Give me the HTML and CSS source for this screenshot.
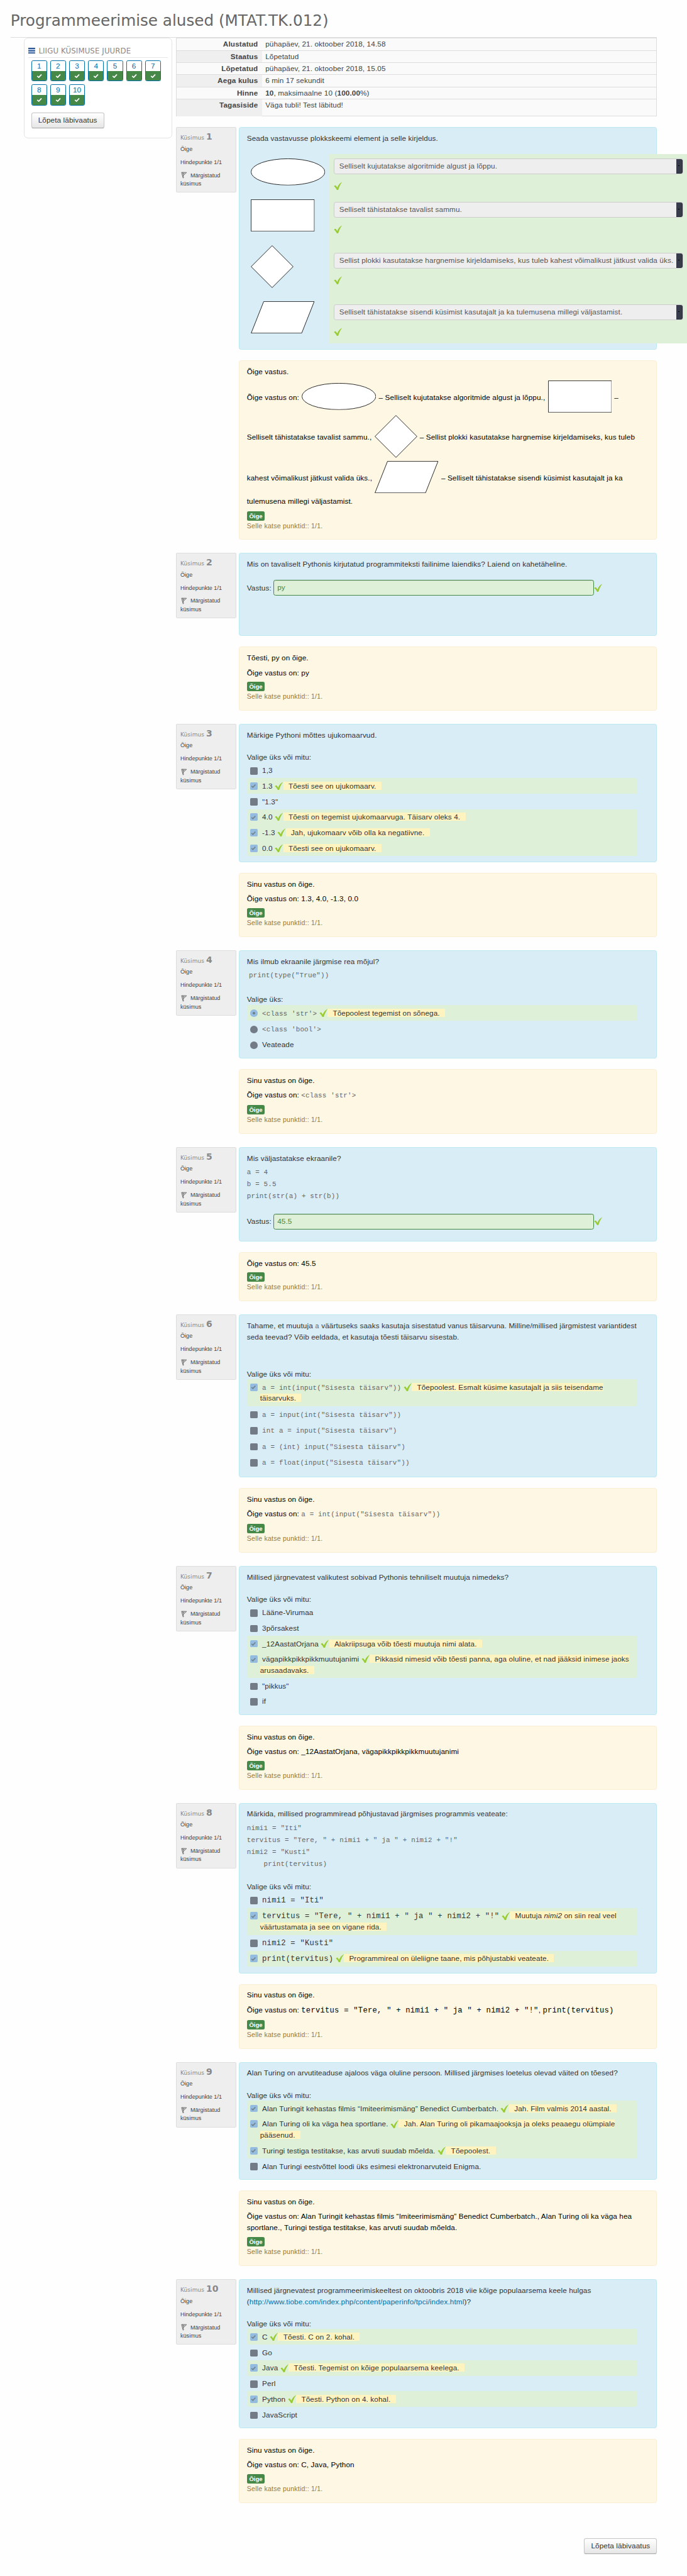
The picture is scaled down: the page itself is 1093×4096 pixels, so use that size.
FILE: index.html
```html
<!DOCTYPE html>
<html lang="et">
<head>
<meta charset="utf-8">
<title>Programmeerimise alused (MTAT.TK.012)</title>
<link rel="stylesheet" href="styles.css">
</head>
<body>
<svg class="defs" aria-hidden="true">
  <symbol id="tick" viewBox="0 0 16 16"><path d="M.3 8.2 3.2 6.6C4.6 7.9 5.6 9.3 6.4 10.9 8.4 6.3 11.4 2.6 15.7.2 12.6 4.6 9.9 9.8 8.6 15.3L6 15.9C4.700 12.700 2.700 10.200.3 8.200Z" fill="#9c3"/></symbol>
  <symbol id="wtick" viewBox="0 0 12 10"><path d="M1.500 5 4.800 8 10.500 1.800" fill="none" stroke="currentColor" stroke-width="2.300"/></symbol>
  <symbol id="flag" viewBox="0 0 12 13"><path d="M1 1.200 4 12.300M3.300 1.300 4.800 12M1 1.300 10.600 1.500 4.500 7.200M3.500 1.400 5 4.600 7.200 2" fill="none" stroke="#666" stroke-width="1.100"/></symbol>
  <symbol id="ellipse" viewBox="0 0 141 51"><ellipse cx="70.500" cy="25.500" rx="70" ry="25" fill="#fff" stroke="#000"/></symbol>
  <symbol id="rect" viewBox="0 0 121 61"><path d="M.5.5H120.500V60.500H.5Z" fill="#fff" stroke="#000"/></symbol>
  <symbol id="diamond" viewBox="0 0 81 81"><path d="M40.500.7 80.300 40.500 40.500 80.300.7 40.500Z" fill="#fff" stroke="#000"/></symbol>
  <symbol id="para" viewBox="0 0 121 61"><path d="M24.500.5H120.300L96.500 60.500H.7Z" fill="#fff" stroke="#000"/></symbol>
</svg>
<div class="page">
  <header class="page-header"><h1>Programmeerimise alused (MTAT.TK.012)</h1></header>
  <div class="columns">
    <aside class="block">
      <h2 class="block-title"><svg class="bars" viewBox="0 0 13 11"><path d="M0 1H13M0 5.500H13M0 10H13" stroke="#0d3f86" stroke-width="2"/><path d="M0 3.200H13M0 7.700H13" stroke="#8fb0dc" stroke-width="1"/></svg>LIIGU KÜSIMUSE JUURDE</h2>
      <nav class="numbers">
        <a class="num">1<i><svg><use href="#wtick"/></svg></i></a>
        <a class="num">2<i><svg><use href="#wtick"/></svg></i></a>
        <a class="num">3<i><svg><use href="#wtick"/></svg></i></a>
        <a class="num">4<i><svg><use href="#wtick"/></svg></i></a>
        <a class="num">5<i><svg><use href="#wtick"/></svg></i></a>
        <a class="num">6<i><svg><use href="#wtick"/></svg></i></a>
        <a class="num">7<i><svg><use href="#wtick"/></svg></i></a>
        <a class="num">8<i><svg><use href="#wtick"/></svg></i></a>
        <a class="num">9<i><svg><use href="#wtick"/></svg></i></a>
        <a class="num">10<i><svg><use href="#wtick"/></svg></i></a>
      </nav>
      <a class="btn">Lõpeta läbivaatus</a>
    </aside>
    <main class="main">
      <dl class="summary">
        <dt>Alustatud</dt><dd>pühapäev, 21. oktoober 2018, 14.58</dd>
        <dt>Staatus</dt><dd>Lõpetatud</dd>
        <dt>Lõpetatud</dt><dd>pühapäev, 21. oktoober 2018, 15.05</dd>
        <dt>Aega kulus</dt><dd>6 min 17 sekundit</dd>
        <dt>Hinne</dt><dd><b>10</b>, maksimaalne 10 (<b>100.00</b>%)</dd>
        <dt>Tagasiside</dt><dd>Väga tubli! Test läbitud!</dd>
      </dl>

      <section class="question q1">
        <div class="info"><h3>Küsimus <b>1</b></h3><p>Õige</p><p>Hindepunkte 1/1</p><p class="flagged"><svg><use href="#flag"/></svg> Märgistatud<br>küsimus</p></div>
        <div class="content">
          <p>Seada vastavusse plokkskeemi element ja selle kirjeldus.</p>
          <div class="match">
            <div class="shapes">
              <svg class="ellipse"><use href="#ellipse"/></svg>
              <svg class="rect"><use href="#rect"/></svg>
              <svg class="diamond"><use href="#diamond"/></svg>
              <svg class="rect"><use href="#para"/></svg>
            </div>
            <div class="picks">
              <div class="pick"><div class="select"><span>Selliselt kujutatakse algoritmide algust ja lõppu.</span><i></i></div><svg class="tick"><use href="#tick"/></svg></div>
              <div class="pick tall"><div class="select"><span>Selliselt tähistatakse tavalist sammu.</span><i></i></div><svg class="tick"><use href="#tick"/></svg></div>
              <div class="pick tall"><div class="select"><span>Sellist plokki kasutatakse hargnemise kirjeldamiseks, kus tuleb kahest võimalikust jätkust valida üks.</span><i></i></div><svg class="tick"><use href="#tick"/></svg></div>
              <div class="pick"><div class="select"><span>Selliselt tähistatakse sisendi küsimist kasutajalt ja ka tulemusena millegi väljastamist.</span><i></i></div><svg class="tick"><use href="#tick"/></svg></div>
            </div>
          </div>
        </div>
        <div class="feedback">
          <p>Õige vastus.</p>
          <p class="pictured">Õige vastus on: <svg class="ellipse"><use href="#ellipse"/></svg> – Selliselt kujutatakse algoritmide algust ja lõppu., <svg class="rect"><use href="#rect"/></svg> –<br>Selliselt tähistatakse tavalist sammu., <svg class="diamond"><use href="#diamond"/></svg> – Sellist plokki kasutatakse hargnemise kirjeldamiseks, kus tuleb<br>kahest võimalikust jätkust valida üks., <svg class="rect"><use href="#para"/></svg> – Selliselt tähistatakse sisendi küsimist kasutajalt ja ka<br>tulemusena millegi väljastamist.</p>
          <span class="badge">Õige</span><p class="points">Selle katse punktid:: 1/1.</p>
        </div>
      </section>

      <section class="question q2">
        <div class="info"><h3>Küsimus <b>2</b></h3><p>Õige</p><p>Hindepunkte 1/1</p><p class="flagged"><svg><use href="#flag"/></svg> Märgistatud<br>küsimus</p></div>
        <div class="content">
          <p>Mis on tavaliselt Pythonis kirjutatud programmiteksti failinime laiendiks? Laiend on kahetäheline.</p>
          <div class="answer">Vastus: <span class="input">py</span><svg class="tick"><use href="#tick"/></svg></div>
        </div>
        <div class="feedback">
          <p>Tõesti, py on õige.</p>
          <p>Õige vastus on: py</p>
          <span class="badge">Õige</span><p class="points">Selle katse punktid:: 1/1.</p>
        </div>
      </section>

      <section class="question q3">
        <div class="info"><h3>Küsimus <b>3</b></h3><p>Õige</p><p>Hindepunkte 1/1</p><p class="flagged"><svg><use href="#flag"/></svg> Märgistatud<br>küsimus</p></div>
        <div class="content">
          <p>Märkige Pythoni mõttes ujukomaarvud.</p>
          <p class="prompt">Valige üks või mitu:</p>
          <ul class="options">
            <li><span class="box"></span>1,3</li>
            <li class="right"><span class="box on"><svg><use href="#wtick"/></svg></span>1.3 <svg class="tick"><use href="#tick"/></svg><em>Tõesti see on ujukomaarv.</em></li>
            <li><span class="box"></span>"1.3"</li>
            <li class="right"><span class="box on"><svg><use href="#wtick"/></svg></span>4.0 <svg class="tick"><use href="#tick"/></svg><em>Tõesti on tegemist ujukomaarvuga. Täisarv oleks 4.</em></li>
            <li class="right"><span class="box on"><svg><use href="#wtick"/></svg></span>-1.3 <svg class="tick"><use href="#tick"/></svg><em>Jah, ujukomaarv võib olla ka negatiivne.</em></li>
            <li class="right"><span class="box on"><svg><use href="#wtick"/></svg></span>0.0 <svg class="tick"><use href="#tick"/></svg><em>Tõesti see on ujukomaarv.</em></li>
          </ul>
        </div>
        <div class="feedback">
          <p>Sinu vastus on õige.</p>
          <p>Õige vastus on: 1.3, 4.0, -1.3, 0.0</p>
          <span class="badge">Õige</span><p class="points">Selle katse punktid:: 1/1.</p>
        </div>
      </section>

      <section class="question q4">
        <div class="info"><h3>Küsimus <b>4</b></h3><p>Õige</p><p>Hindepunkte 1/1</p><p class="flagged"><svg><use href="#flag"/></svg> Märgistatud<br>küsimus</p></div>
        <div class="content">
          <p>Mis ilmub ekraanile järgmise rea mõjul?</p>
          <pre class="inset">print(type("True"))</pre>
          <p class="prompt">Valige üks:</p>
          <ul class="options coded">
            <li class="right"><span class="box round on"></span><code>&lt;class 'str'&gt;</code> <svg class="tick"><use href="#tick"/></svg><em>Tõepoolest tegemist on sõnega.</em></li>
            <li><span class="box round"></span><code>&lt;class 'bool'&gt;</code></li>
            <li><span class="box round"></span>Veateade</li>
          </ul>
        </div>
        <div class="feedback coded">
          <p>Sinu vastus on õige.</p>
          <p>Õige vastus on: <code>&lt;class 'str'&gt;</code></p>
          <span class="badge">Õige</span><p class="points">Selle katse punktid:: 1/1.</p>
        </div>
      </section>

      <section class="question q5">
        <div class="info"><h3>Küsimus <b>5</b></h3><p>Õige</p><p>Hindepunkte 1/1</p><p class="flagged"><svg><use href="#flag"/></svg> Märgistatud<br>küsimus</p></div>
        <div class="content">
          <p>Mis väljastatakse ekraanile?</p>
          <pre>a = 4
b = 5.5
print(str(a) + str(b))</pre>
          <div class="answer">Vastus: <span class="input">45.5</span><svg class="tick"><use href="#tick"/></svg></div>
        </div>
        <div class="feedback">
          <p>Õige vastus on: 45.5</p>
          <span class="badge">Õige</span><p class="points">Selle katse punktid:: 1/1.</p>
        </div>
      </section>

      <section class="question q6">
        <div class="info"><h3>Küsimus <b>6</b></h3><p>Õige</p><p>Hindepunkte 1/1</p><p class="flagged"><svg><use href="#flag"/></svg> Märgistatud<br>küsimus</p></div>
        <div class="content">
          <p>Tahame, et muutuja <code>a</code> väärtuseks saaks kasutaja sisestatud vanus täisarvuna. Milline/millised järgmistest variantidest<br>seda teevad? Võib eeldada, et kasutaja tõesti täisarvu sisestab.</p>
          <p class="prompt">Valige üks või mitu:</p>
          <ul class="options coded">
            <li class="right"><span class="box on"><svg><use href="#wtick"/></svg></span><code>a = int(input("Sisesta täisarv"))</code> <svg class="tick"><use href="#tick"/></svg><em>Tõepoolest. Esmalt küsime kasutajalt ja siis teisendame<br>täisarvuks.</em></li>
            <li><span class="box"></span><code>a = input(int("Sisesta täisarv"))</code></li>
            <li><span class="box"></span><code>int a = input("Sisesta täisarv")</code></li>
            <li><span class="box"></span><code>a = (int) input("Sisesta täisarv")</code></li>
            <li><span class="box"></span><code>a = float(input("Sisesta täisarv"))</code></li>
          </ul>
        </div>
        <div class="feedback coded">
          <p>Sinu vastus on õige.</p>
          <p>Õige vastus on: <code>a = int(input("Sisesta täisarv"))</code></p>
          <span class="badge">Õige</span><p class="points">Selle katse punktid:: 1/1.</p>
        </div>
      </section>

      <section class="question q7">
        <div class="info"><h3>Küsimus <b>7</b></h3><p>Õige</p><p>Hindepunkte 1/1</p><p class="flagged"><svg><use href="#flag"/></svg> Märgistatud<br>küsimus</p></div>
        <div class="content">
          <p>Millised järgnevatest valikutest sobivad Pythonis tehniliselt muutuja nimedeks?</p>
          <p class="prompt">Valige üks või mitu:</p>
          <ul class="options">
            <li><span class="box"></span>Lääne-Virumaa</li>
            <li><span class="box"></span>3põrsakest</li>
            <li class="right"><span class="box on"><svg><use href="#wtick"/></svg></span>_12AastatOrjana <svg class="tick"><use href="#tick"/></svg><em>Alakriipsuga võib tõesti muutuja nimi alata.</em></li>
            <li class="right"><span class="box on"><svg><use href="#wtick"/></svg></span>vägapikkpikkpikkmuutujanimi <svg class="tick"><use href="#tick"/></svg><em>Pikkasid nimesid võib tõesti panna, aga oluline, et nad jääksid inimese jaoks<br>arusaadavaks.</em></li>
            <li><span class="box"></span>"pikkus"</li>
            <li><span class="box"></span>if</li>
          </ul>
        </div>
        <div class="feedback">
          <p>Sinu vastus on õige.</p>
          <p>Õige vastus on: _12AastatOrjana, vägapikkpikkpikkmuutujanimi</p>
          <span class="badge">Õige</span><p class="points">Selle katse punktid:: 1/1.</p>
        </div>
      </section>

      <section class="question q8">
        <div class="info"><h3>Küsimus <b>8</b></h3><p>Õige</p><p>Hindepunkte 1/1</p><p class="flagged"><svg><use href="#flag"/></svg> Märgistatud<br>küsimus</p></div>
        <div class="content">
          <p>Märkida, millised programmiread põhjustavad järgmises programmis veateate:</p>
          <pre>nimi1 = "Iti"
tervitus = "Tere, " + nimi1 + " ja " + nimi2 + "!"
nimi2 = "Kusti"
    print(tervitus)</pre>
          <p class="prompt">Valige üks või mitu:</p>
          <ul class="options mono">
            <li><span class="box"></span><tt>nimi1 = "Iti"</tt></li>
            <li class="right"><span class="box on"><svg><use href="#wtick"/></svg></span><tt>tervitus = "Tere, " + nimi1 + " ja " + nimi2 + "!"</tt> <svg class="tick"><use href="#tick"/></svg><em>Muutuja <i>nimi2</i> on siin real veel<br>väärtustamata ja see on vigane rida.</em></li>
            <li><span class="box"></span><tt>nimi2 = "Kusti"</tt></li>
            <li class="right"><span class="box on"><svg><use href="#wtick"/></svg></span><tt>print(tervitus)</tt> <svg class="tick"><use href="#tick"/></svg><em>Programmireal on üleliigne taane, mis põhjustabki veateate.</em></li>
          </ul>
        </div>
        <div class="feedback coded">
          <p>Sinu vastus on õige.</p>
          <p>Õige vastus on: <tt>tervitus = "Tere, " + nimi1 + " ja " + nimi2 + "!"</tt>, <tt>print(tervitus)</tt></p>
          <span class="badge">Õige</span><p class="points">Selle katse punktid:: 1/1.</p>
        </div>
      </section>

      <section class="question q9">
        <div class="info"><h3>Küsimus <b>9</b></h3><p>Õige</p><p>Hindepunkte 1/1</p><p class="flagged"><svg><use href="#flag"/></svg> Märgistatud<br>küsimus</p></div>
        <div class="content">
          <p>Alan Turing on arvutiteaduse ajaloos väga oluline persoon. Millised järgmises loetelus olevad väited on tõesed?</p>
          <p class="prompt">Valige üks või mitu:</p>
          <ul class="options">
            <li class="right"><span class="box on"><svg><use href="#wtick"/></svg></span>Alan Turingit kehastas filmis “Imiteerimismäng” Benedict Cumberbatch. <svg class="tick"><use href="#tick"/></svg><em>Jah. Film valmis 2014 aastal.</em></li>
            <li class="right"><span class="box on"><svg><use href="#wtick"/></svg></span>Alan Turing oli ka väga hea sportlane. <svg class="tick"><use href="#tick"/></svg><em>Jah. Alan Turing oli pikamaajooksja ja oleks peaaegu olümpiale<br>pääsenud.</em></li>
            <li class="right"><span class="box on"><svg><use href="#wtick"/></svg></span>Turingi testiga testitakse, kas arvuti suudab mõelda. <svg class="tick"><use href="#tick"/></svg><em>Tõepoolest.</em></li>
            <li><span class="box"></span>Alan Turingi eestvõttel loodi üks esimesi elektronarvuteid Enigma.</li>
          </ul>
        </div>
        <div class="feedback">
          <p>Sinu vastus on õige.</p>
          <p>Õige vastus on: Alan Turingit kehastas filmis “Imiteerimismäng” Benedict Cumberbatch., Alan Turing oli ka väga hea<br>sportlane., Turingi testiga testitakse, kas arvuti suudab mõelda.</p>
          <span class="badge">Õige</span><p class="points">Selle katse punktid:: 1/1.</p>
        </div>
      </section>

      <section class="question q10">
        <div class="info"><h3>Küsimus <b>10</b></h3><p>Õige</p><p>Hindepunkte 1/1</p><p class="flagged"><svg><use href="#flag"/></svg> Märgistatud<br>küsimus</p></div>
        <div class="content">
          <p>Millised järgnevatest programmeerimiskeeltest on oktoobris 2018 viie kõige populaarsema keele hulgas<br>(<a>http://www.tiobe.com/index.php/content/paperinfo/tpci/index.html</a>)?</p>
          <p class="prompt">Valige üks või mitu:</p>
          <ul class="options">
            <li class="right"><span class="box on"><svg><use href="#wtick"/></svg></span>C <svg class="tick"><use href="#tick"/></svg><em>Tõesti. C on 2. kohal.</em></li>
            <li><span class="box"></span>Go</li>
            <li class="right"><span class="box on"><svg><use href="#wtick"/></svg></span>Java <svg class="tick"><use href="#tick"/></svg><em>Tõesti. Tegemist on kõige populaarsema keelega.</em></li>
            <li><span class="box"></span>Perl</li>
            <li class="right"><span class="box on"><svg><use href="#wtick"/></svg></span>Python <svg class="tick"><use href="#tick"/></svg><em>Tõesti. Python on 4. kohal.</em></li>
            <li><span class="box"></span>JavaScript</li>
          </ul>
        </div>
        <div class="feedback">
          <p>Sinu vastus on õige.</p>
          <p>Õige vastus on: C, Java, Python</p>
          <span class="badge">Õige</span><p class="points">Selle katse punktid:: 1/1.</p>
        </div>
      </section>

      <div class="finish"><a class="btn">Lõpeta läbivaatus</a></div>
    </main>
  </div>
</div>
</body>
</html>
```
FILE: styles.css
```css
* { box-sizing: border-box; }

html { background: #fefefe; }

body {
  margin: 0;
  font: 14px/21px "Liberation Sans", Arial, sans-serif;
  letter-spacing: 0.13px;
  color: #333;
}

p, h1, h2, h3, pre, dl, dd, ul { margin: 0; padding: 0; font-weight: normal; }

.defs { display: none; }

.page { zoom: 0.839; width: 1302.700px; padding: 0 0 38px 20px; overflow: hidden; }

.page-header { width: 1226px; height: 71px; border-bottom: 1px solid #ddd; padding-top: 19px; }
.page-header h1 { font: 29.4px/40px "DejaVu Sans", sans-serif; letter-spacing: 0; color: #666; }

.columns { display: flex; align-items: flex-start; }

/* Navigation block */
.block { flex: none; width: 282px; height: 191px; margin: 0 7px 0 25px; padding: 16px 8px 0; border: 1px solid #e3e3e3; border-radius: 8px; background: #fff; }
.block-title { display: flex; align-items: center; height: 22px; padding-bottom: 2px; border-bottom: 1px solid #e5e5e5; font: 14px/20px "DejaVu Sans", sans-serif; letter-spacing: 0.15px; color: #888; }
.bars { width: 13px; height: 11px; margin: -3px 6px 0 0; }
.numbers { display: flex; flex-wrap: wrap; gap: 6px; padding: 4px 0 0 5px; }
.num { display: flex; flex-direction: column; width: 30px; height: 40px; border: 1px solid #0070a8; border-radius: 3px; overflow: hidden; text-align: center; line-height: 19px; color: #0070a8; }
.num i { display: flex; flex: 1; align-items: center; justify-content: center; background: #468847; color: #fff; }
.num svg { width: 11px; height: 9px; }
.btn { display: inline-block; height: 30px; padding: 0 12px; border: 1px solid #c5c5c5; border-bottom-color: #aaa; border-radius: 4px; background: linear-gradient(#fff, #e6e6e6); box-shadow: 0 1px 2px rgba(0, 0, 0, .06); line-height: 27px; white-space: nowrap; color: #333; }
.block .btn { margin: 13px 0 0 5px; }

/* Attempt summary */
.main { flex: none; width: 912px; }
.summary { display: grid; grid-template-columns: 162px 1fr; grid-template-rows: 23px 23px 23px 23px 23px 33px; height: 149px; margin-top: 1px; border: 1px solid #ddd; border-top: 0; background: #fafafa; line-height: 22px; }
.summary dt { border-top: 1px solid #ddd; padding-right: 8px; text-align: right; font-weight: bold; color: #444; letter-spacing: 0.2px; }
.summary dt:nth-of-type(even) { background: #efefef; }
.summary dd { border-top: 1px solid #ddd; padding-left: 6px; color: #444; }

/* Questions */
.question { display: grid; grid-template-columns: 114px 793px; column-gap: 5px; row-gap: 20.300px; margin-bottom: 25px; align-items: start; }
.summary + .question { margin-top: 20.300px; }
.info { height: 124px; padding: 6px 7px; border: 1px solid #ddd; border-radius: 2px; background: #eee; font-size: 10.8px; line-height: 16px; letter-spacing: 0; color: #444; }
.info h3 { height: 26.500px; font: 10.700px/22px "DejaVu Sans", sans-serif; letter-spacing: 0.1px; color: #888; }
.info h3 b { font-size: 16.700px; letter-spacing: 0; }
.info p { margin-bottom: 9px; }
.info svg { width: 12px; height: 13px; margin: 0 3px 0 1px; vertical-align: -3px; }
.content, .feedback { grid-column: 2; padding: 9px 36px 0 14px; border: 1px solid #bce8f1; border-radius: 4px; background: #d9edf7; white-space: nowrap; }
.feedback { padding-right: 14px; height: 121.200px; border-color: #fbeed5; background: #fdf7e3; color: #000; }
.feedback p { margin-bottom: 7px; }
.feedback.coded { height: 123px; }
.feedback.coded p:nth-of-type(2) { margin-bottom: 9px; }
.content .prompt { margin-top: 21px; }

.q1 .content { height: 421.500px; }
.q1 .feedback { height: 340px; }
.q1 .badge { margin-top: 9px; }
.q2 .content { height: 157.500px; }
.q3 .content { height: 262.500px; }
.q4 .content { height: 205px; }
.q5 .content { height: 178.500px; }
.q5 .feedback { height: 93px; }
.q6 .content { height: 308.700px; }
.q6 .content > p { line-height: 22px; }
.q6 .content .prompt { margin-top: 48px; line-height: 21px; }
.q7 .content { height: 282.500px; }
.q8 .content { height: 322.700px; }
.q9 .content { height: 223.700px; }
.q9 .feedback { height: 143px; }
.q10 .content { height: 282px; }
.q4 .prompt { margin-top: 23px; }

.badge { display: block; width: 34px; height: 18px; border-radius: 3px; background: #468847; text-align: center; font: bold 11.300px/18px "Liberation Sans", Arial, sans-serif; letter-spacing: 0; color: #fff; }
.feedback .points { margin: 0; font-size: 12.700px; line-height: 21px; letter-spacing: 0.22px; color: #957a48; }

/* Matching question */
.match { display: flex; margin-top: 20px; }
.shapes { display: flex; flex: none; flex-direction: column; gap: 26px; width: 157px; padding: 8px 0 0 8px; }
.ellipse { width: 141px; height: 51px; }
.rect { width: 121px; height: 61px; }
.diamond { width: 81px; height: 81px; }
.picks { flex: none; width: 677.700px; height: 358px; background: #dff0d8; }
.pick { height: 82px; padding: 8px 0 0 8px; }
.pick.tall { height: 97px; }
.select { display: flex; width: 662px; height: 30px; border: 1px solid #ccc; border-radius: 4px; overflow: hidden; background: #eee; line-height: 27px; color: #555; }
.select span { flex: 1; padding-left: 9px; }
.select i { display: flex; align-items: center; justify-content: center; width: 12px; border-right: 2px solid #262936; border-bottom: 2px solid #262936; border-radius: 0 3px 3px 0; background: #383c4a; }
.select i::after { content: ""; border: 3px solid transparent; border-top-color: #000; border-bottom: 0; filter: drop-shadow(0 1px 0 #aaa); }
.pick .tick { display: block; margin: 14px 0 0; }
.pictured svg { margin: 0 1px 5px; vertical-align: middle; }

.tick { width: 16px; height: 16px; vertical-align: -3px; }

/* Short answers */
.answer { display: flex; align-items: center; margin-top: 20px; height: 30px; }
.input { width: 608px; height: 30px; margin-left: 4px; padding-left: 6px; border: 1px solid #468847; border-radius: 4px; background: #dff0d8; box-shadow: inset 0 1px 1px rgba(0, 0, 0, .12); line-height: 27px; color: #468847; }

/* Code */
code, pre { font: 13px/21px "Liberation Mono", monospace; letter-spacing: 0.2px; color: #666; }
tt { font: 14.500px/21px "Liberation Mono", monospace; letter-spacing: 0.3px; }
code, tt { line-height: 1; }
pre { margin-top: 6px; line-height: 22.500px; }
pre.inset { padding-left: 4px; }
.q5 .answer { margin-top: 21px; }

/* Choices */
.options { list-style: none; }
.options li { min-height: 29.500px; padding: 4.250px 0 4.250px 25px; }
.options.coded li { padding-bottom: 5.100px; }
.options.mono li { padding-bottom: 4.700px; }
.options .right { background: #dff0d8; }
.options em { padding: 0 10px; background: #fff3bf; font-style: normal; }
.box { display: inline-block; width: 14px; height: 14px; margin: 0 9px 0 -19px; border-radius: 2px; background: #737b87; vertical-align: -3px; line-height: 0; }
.box.on { background: #93bce0; color: #6f8087; }
.box svg { width: 10px; height: 9px; margin: 3px 2px; }
.box.round { border-radius: 50%; }
.box.round.on { background: radial-gradient(circle, #6f7f8a 0 2px, #93bce0 2.500px); }
.content a { color: #0070a8; }

.finish { display: flex; justify-content: flex-end; margin-top: 67px; }
```
